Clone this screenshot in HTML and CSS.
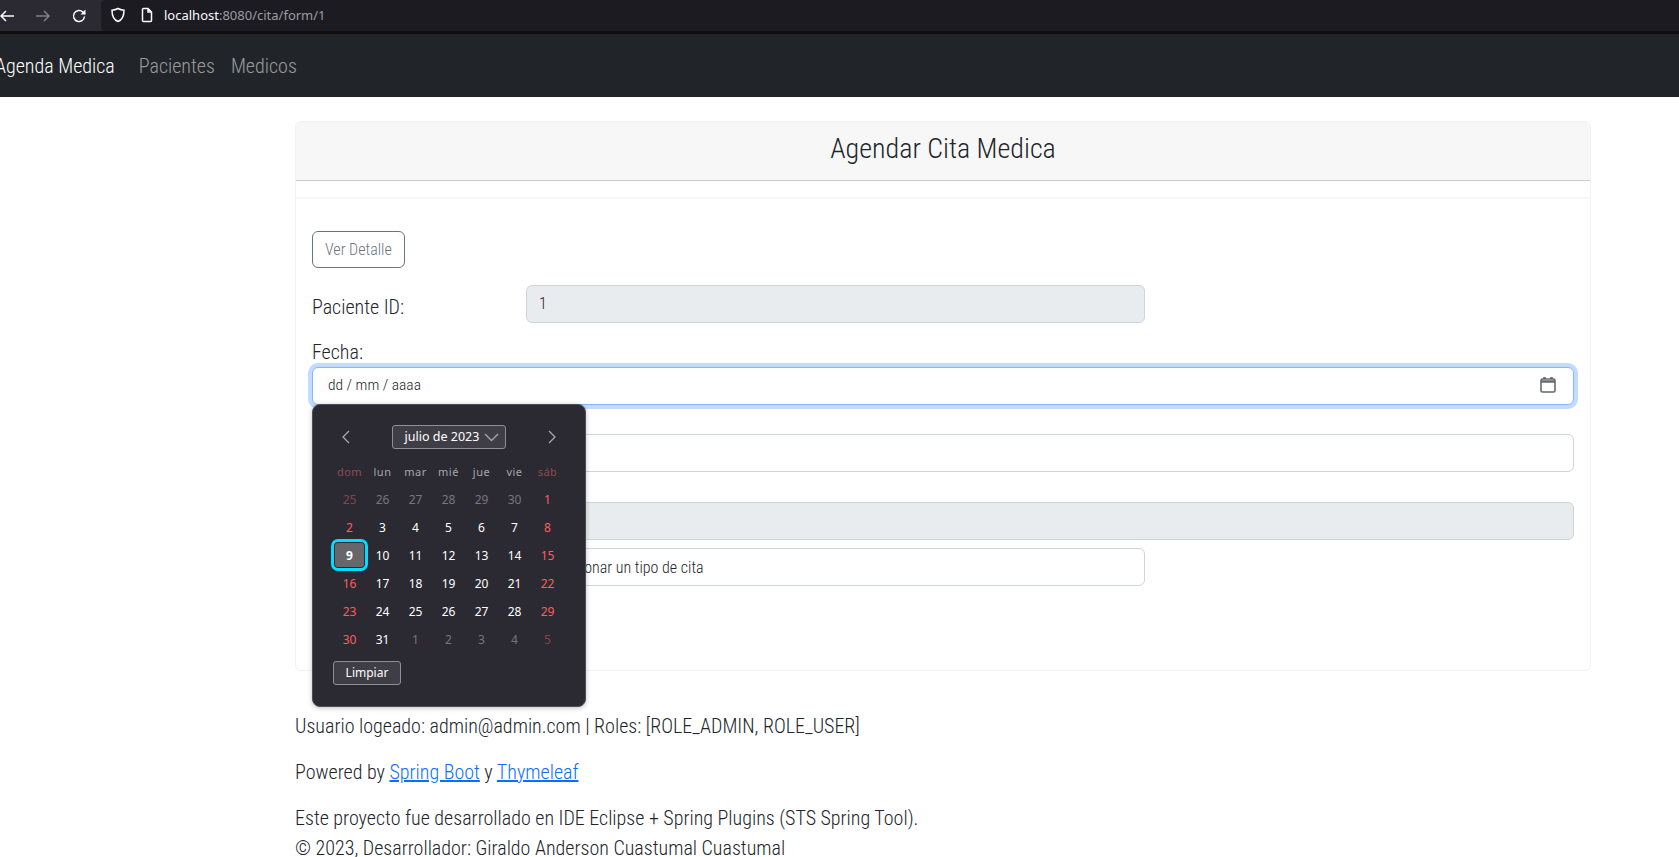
FILE: index.html
```html
<!DOCTYPE html>
<html lang="es">
<head>
  <meta charset="UTF-8">
  <title>Agendar Cita Medica</title>
  <link rel="stylesheet" href="styles.css">
</head>
<body>
  <div class="browser">
    <div class="browser-nav">
      <svg class="ico ico-back" width="16" height="16" viewBox="0 0 16 16"><path d="M15 8H2M7 3L2 8l5 5"/></svg>
      <svg class="ico ico-off" width="16" height="16" viewBox="0 0 16 16"><path d="M1 8h13M9 3l5 5-5 5"/></svg>
      <svg class="ico" width="16" height="16" viewBox="0 0 16 16"><path d="M13.500 8.500a5.500 5.500 0 1 1-1.600-4.400L14 6"/><path class="fill" d="M14.500 1.500v5h-5z"/></svg>
    </div>
    <div class="urlbar">
      <svg class="ico" width="16" height="16" viewBox="0 0 16 16"><path d="M8 1.500c2 1.200 4 1.600 6 1.700 0 5-1.500 9.500-6 11.300C3.500 12.700 2 8.200 2 3.200c2-.1 4-.5 6-1.700z"/></svg>
      <svg class="ico" width="16" height="16" viewBox="0 0 16 16"><path d="M3.500 2.500a1 1 0 0 1 1-1H9l3.500 3.500v8.500a1 1 0 0 1-1 1h-7a1 1 0 0 1-1-1zM9 1.500V5h3.500"/></svg>
      <span class="url"><b>localhost</b>:8080/cita/form/1</span>
    </div>
  </div>

  <nav class="navbar">
    <a class="brand" href="#">Agenda Medica</a>
    <a class="nav-link" href="#">Pacientes</a>
    <a class="nav-link" href="#">Medicos</a>
  </nav>

  <main class="container">
    <section class="card">
      <header class="card-header">Agendar Cita Medica</header>
      <div class="card-gap"></div>
      <form class="card-body">
        <a class="btn" href="#">Ver Detalle</a>

        <div class="row-inline">
          <label class="label-side">Paciente ID:</label>
          <input class="field field-half field-value" type="text" value="1" disabled>
        </div>

        <div class="group group-date">
          <label>Fecha:</label>
          <div class="date-wrap">
            <div class="field field-focus">
              <span class="date-text">dd / mm / aaaa</span>
              <svg width="18" height="18" viewBox="0 0 18 18" class="cal-icon"><path d="M2 4.500a1.500 1.500 0 0 1 1.500-1.500h11a1.500 1.500 0 0 1 1.500 1.500v10a1.500 1.500 0 0 1-1.500 1.500h-11a1.500 1.500 0 0 1-1.500-1.500z"/><path d="M2 5.500h14" class="thick"/><path d="M5.500 1v2M12.500 1v2" class="thick"/></svg>
            </div>

            <div class="picker">
              <div class="picker-head">
                <svg width="12" height="14" viewBox="0 0 12 14"><path d="M9 1L3 7l6 6"/></svg>
                <div class="month-btn">julio de 2023
                  <svg width="15" height="9" viewBox="0 0 15 9"><path d="M1 1l6.500 6.500L14 1"/></svg>
                </div>
                <svg width="12" height="14" viewBox="0 0 12 14"><path d="M3 1l6 6-6 6"/></svg>
              </div>
              <div class="days" id="days"></div>
              <div class="clear-btn">Limpiar</div>
            </div>
          </div>
        </div>

        <div class="group group-hour">
          <input class="field" type="text">
        </div>

        <div class="group group-medico">
          <input class="field" type="text" disabled>
        </div>

        <div class="row-inline row-tipo">
          <div class="label-side"></div>
          <div class="field field-half">Seleccionar un tipo de cita</div>
        </div>
      </form>
    </section>

    <footer class="footer">
      <p>Usuario logeado: admin@admin.com | Roles: [ROLE_ADMIN, ROLE_USER]</p>
      <p>Powered by <a href="#">Spring Boot</a> y <a href="#">Thymeleaf</a></p>
      <p class="tight">Este proyecto fue desarrollado en IDE Eclipse + Spring Plugins (STS Spring Tool).</p>
      <p>&copy; 2023, Desarrollador: Giraldo Anderson Cuastumal Cuastumal</p>
    </footer>
  </main>

  <script src="picker.js"></script>
</body>
</html>
```

FILE: picker.js
```js
// calendario de julio 2023, empieza en dom 25 de junio
var days = document.getElementById('days');
var heads = ['dom', 'lun', 'mar', 'mié', 'jue', 'vie', 'sáb'];
var nums = [25, 26, 27, 28, 29, 30];
for (var i = 1; i <= 31; i++) nums.push(i);
for (var j = 1; j <= 5; j++) nums.push(j);

heads.forEach(function (h, i) {
  var c = document.createElement('span');
  c.className = 'head' + (i % 7 === 0 || i % 7 === 6 ? ' weekend' : '');
  c.textContent = h;
  days.appendChild(c);
});

nums.forEach(function (n, i) {
  var c = document.createElement('span');
  var outside = i < 6 || i > 36;
  var weekend = i % 7 === 0 || i % 7 === 6;
  c.className = 'day' + (outside ? ' outside' : '') + (weekend ? ' weekend' : '') + (i === 14 ? ' today' : '');
  c.textContent = n;
  days.appendChild(c);
});
```

FILE: styles.css
```css
* {
  box-sizing: border-box;
}

body {
  margin: 0;
  height: 857px;
  overflow: hidden;
  background: #fff;
  color: #212529;
  font-family: Roboto, "Liberation Sans", sans-serif;
  font-weight: 300;
  font-stretch: condensed;
  font-size: 20px;
}

.browser {
  display: flex;
  height: 34px;
  background: #2b2a33;
  border-bottom: 3px solid #0f0f12;
}

.browser-nav {
  width: 102px;
  display: flex;
  align-items: center;
  gap: 20px;
  margin-left: -1px;
}

.ico {
  fill: none;
  stroke: #fbfbfe;
  stroke-width: 1.500;
}

.ico .fill {
  fill: #fbfbfe;
  stroke: none;
}

.ico-off {
  opacity: .4;
}

.urlbar {
  flex: 1;
  display: flex;
  align-items: center;
  gap: 13px;
  padding-left: 9px;
  padding-bottom: 1px;
  background: #1c1b22;
  border-radius: 4px 0 0 4px;
}

.url {
  margin-left: -4px;
  color: #9b9ba0;
  font-family: "Noto Sans", sans-serif;
  font-weight: 400;
  font-stretch: normal;
  font-size: 13px;
}

.url b {
  font-weight: 400;
  color: #fbfbfe;
}

.navbar {
  height: 63px;
  display: flex;
  align-items: center;
  background: #212529;
}

.brand {
  color: #fff;
  font-size: 20px;
  margin-left: -5px;
  margin-right: 24px;
  text-decoration: none;
}

.nav-link {
  color: rgba(255, 255, 255, .55);
  font-size: 20px;
  margin-right: 16px;
  text-decoration: none;
}

.container {
  margin-left: 295px;
  width: 1296px;
  padding-top: 24px;
}

.card {
  height: 550px;
  border: 1px solid #f1f2f3;
  border-radius: 6px;
}

.card-header {
  height: 59px;
  background: #f7f7f7;
  border-bottom: 1px solid #cfcfcf;
  border-radius: 6px 6px 0 0;
  font-size: 28px;
  line-height: 54px;
  text-align: center;
}

.card-gap {
  height: 18px;
  border-bottom: 2px solid #f6f6f7;
}

.card-body {
  padding: 32px 16px 0;
}

.btn {
  display: inline-block;
  height: 37px;
  padding: 0 12px;
  border: 1px solid #6c757d;
  border-radius: 6px;
  color: #6c757d;
  font-size: 16px;
  line-height: 35px;
  text-decoration: none;
}

label {
  display: block;
  font-size: 20px;
  line-height: 30px;
}

.row-inline {
  display: flex;
  margin-top: 17px;
}

.label-side {
  width: 214px;
  padding-top: 7px;
}

.field {
  display: flex;
  align-items: center;
  justify-content: space-between;
  width: 100%;
  height: 38px;
  padding: 0 13px;
  background: #fff;
  border: 1px solid #ced4da;
  border-radius: 6px;
  color: #212529;
  font-family: inherit;
  font-weight: 300;
  font-stretch: condensed;
  font-size: 16px;
}

.field:disabled {
  background: #e9ecef;
  opacity: 1;
  color: #212529;
}

.field-half {
  width: 619px;
}

.field-value {
  padding: 0 12px 2px;
}

.field-focus {
  border-color: #86b7fe;
  box-shadow: 0 0 0 4px #c2dbfe;
  padding: 0 16px 2px 15px;
}

.date-text {
  font-size: 15.500px;
}

.cal-icon {
  fill: none;
  stroke: #66696e;
  stroke-width: 1.600;
}

.cal-icon .thick {
  stroke-width: 2.500;
}

.group-date {
  margin-top: 14px;
}

.date-wrap {
  position: relative;
}

.group-hour {
  margin-top: 29px;
}

.group-medico {
  margin-top: 30px;
}

.row-tipo {
  margin-top: 8px;
}

/* calendario nativo */
.picker {
  position: absolute;
  left: 0;
  top: 37px;
  width: 274px;
  height: 303px;
  padding: 20px 20px 0 20px;
  background: #2b2a33;
  border: 1px solid #4e4d55;
  border-radius: 8px;
  box-shadow: 0 1px 5px rgba(0, 0, 0, .25);
  color: #fff;
  font-family: "Noto Sans", sans-serif;
  font-weight: 400;
  font-stretch: normal;
  font-size: 12px;
}

.picker-head {
  display: flex;
  align-items: center;
  justify-content: space-between;
  height: 24px;
  padding: 0 7px;
}

.picker-head svg {
  fill: none;
  stroke: #a8a8ac;
  stroke-width: 1.300;
}

.month-btn {
  display: flex;
  align-items: center;
  justify-content: center;
  gap: 5px;
  width: 114px;
  height: 24px;
  padding-left: 6px;
  background: #3f3e46;
  border: 1px solid #8f8f93;
  border-radius: 3px;
  font-size: 12.500px;
  line-height: 1;
}

.days {
  display: grid;
  grid-template-columns: repeat(7, 33px);
  grid-auto-rows: 28px;
  margin-top: 8px;
}

.days span {
  display: flex;
  align-items: center;
  justify-content: center;
}

.head {
  color: #a5a5a8;
  font-size: 11px;
  letter-spacing: .5px;
}

.head.weekend {
  color: #8f4a4f;
}

.day.weekend {
  color: #ff5c5c;
}

.day.outside {
  color: #77767c;
}

.day.outside.weekend {
  color: #8a4249;
}

.days .today {
  position: relative;
  z-index: 0;
  color: #fff;
  font-weight: 700;
}

.today::before {
  content: "";
  box-sizing: border-box;
  position: absolute;
  z-index: -1;
  left: -2px;
  top: -2px;
  width: 37px;
  height: 32px;
  background: #67676b;
  border: 3px solid #00ddff;
  border-radius: 7px;
  box-shadow: inset 0 0 0 1px #2b2a33;
}

.clear-btn {
  width: 68px;
  height: 24px;
  margin-top: 8px;
  background: #3f3e46;
  border: 1px solid #8f8f93;
  border-radius: 3px;
  line-height: 22px;
  text-align: center;
}

.footer {
  margin-top: 40px;
}

.footer p {
  margin: 0 0 16px;
  line-height: 30px;
}

.footer p.tight {
  margin-bottom: 0;
}

.footer a {
  color: #0d6efd;
}
```
